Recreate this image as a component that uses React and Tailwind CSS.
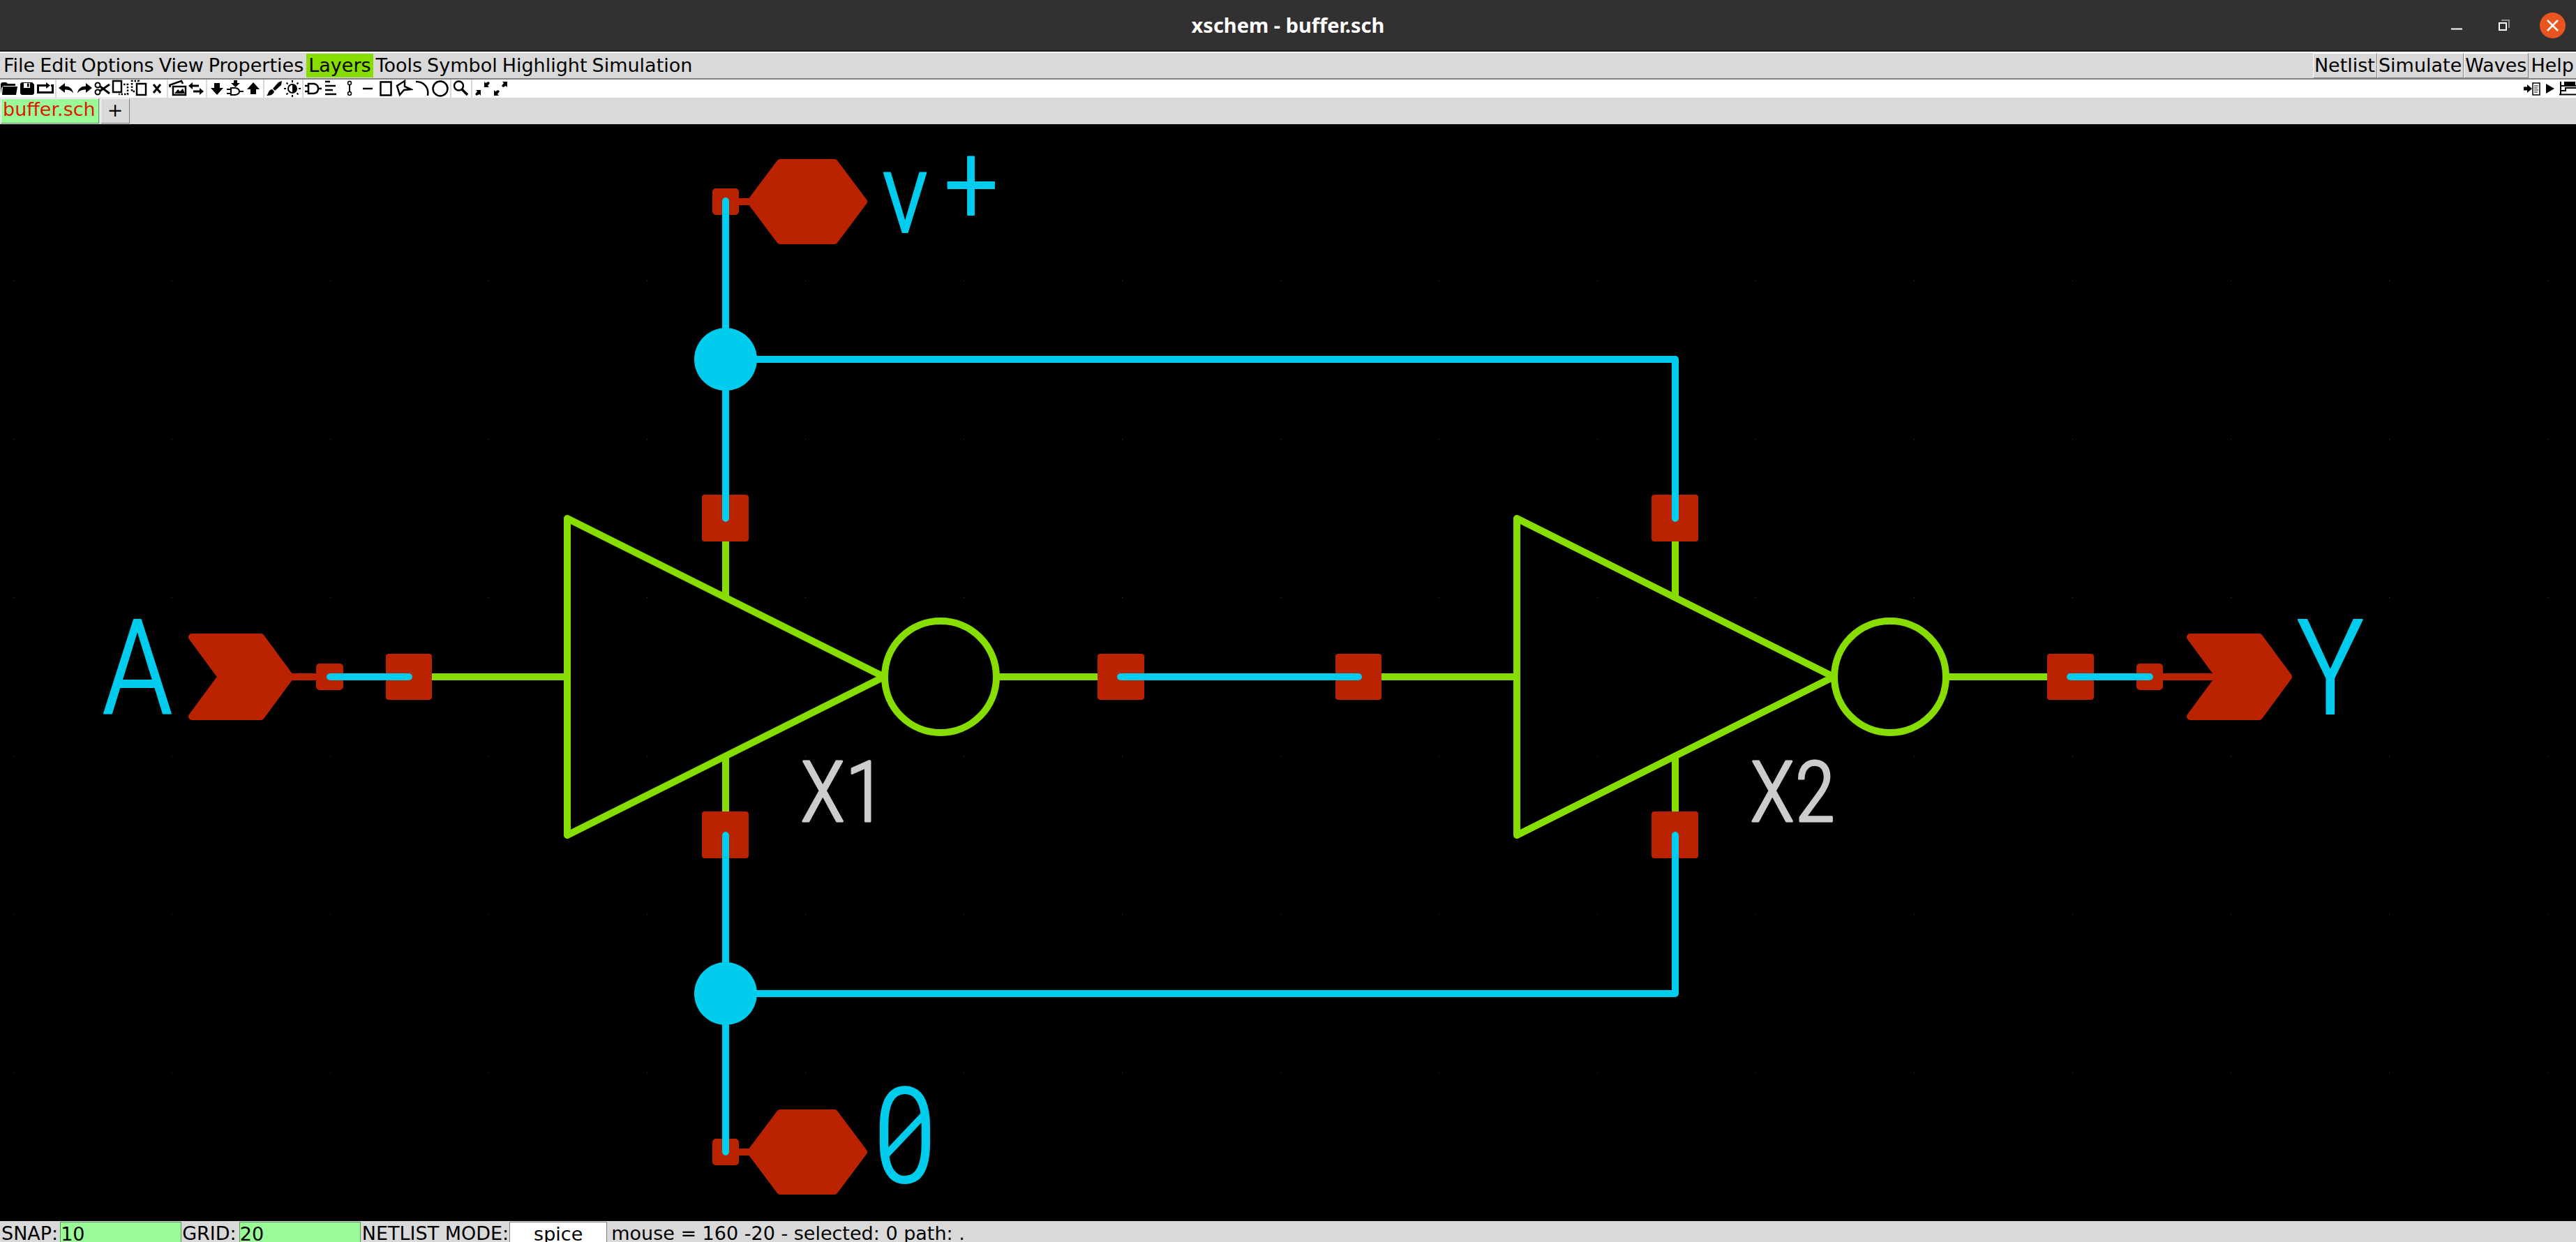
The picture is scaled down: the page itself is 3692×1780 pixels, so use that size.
const MENUS = ["File", "Edit", "Options", "View", "Properties", "Layers", "Tools", "Symbol", "Highlight", "Simulation"];
const ACTIONS = ["Netlist", "Simulate", "Waves"];

const ICONS = {
  Open: (
    <path d="M1 21V6l2-2h6l2 2h11v3H5L2 12zM4 10h21l-2 12H3z" fill="#000" stroke="#000" />
  ),
  Save: (
    <>
      <path d="M3 6l2-2h15l3 3v13l-2 2H5l-2-2z" fill="#000" />
      <path d="M8 5h9v7H8z" fill="#fff" />
      <path d="M13 5.500h2.500v5h-2.500z" fill="#000" />
    </>
  ),
  Reload: (
    <>
      <path d="M8 8.500H2.500v10h21v-10H21" strokeWidth="3" />
      <path d="M8 8.500h8" strokeWidth="3" />
      <path d="M14 4l6 4.500-6 4.500z" fill="#000" />
    </>
  ),
  Undo: <path d="M2 12l9-7v4.500c6 0 11 3 12 10-3-4-7-5-12-5V19z" fill="#000" />,
  Redo: <path d="M24 12l-9-7v4.500c-6 0-11 3-12 10 3-4 7-5 12-5V19z" fill="#000" />,
  Cut: (
    <>
      <circle cx="6" cy="8" r="3.500" strokeWidth="2" />
      <circle cx="6" cy="18" r="3.500" strokeWidth="2" />
      <path d="M9 9.500L23 20M9 16.500L23 7" strokeWidth="3" />
    </>
  ),
  Copy: (
    <>
      <path d="M2 2h12v16H2z" strokeWidth="2.500" />
      <path d="M17 7h6v14H10" strokeWidth="2.500" strokeDasharray="2.500 2" />
    </>
  ),
  Paste: (
    <>
      <path d="M10 6h13v16H10z" strokeWidth="2.500" />
      <path d="M7 17H3V2h10v2" strokeWidth="2.500" strokeDasharray="2.500 2" />
    </>
  ),
  Delete: <path d="M8 7l10 12M18 7L8 19" strokeWidth="3" />,
  Merge: (
    <>
      <path d="M2 11L1 8l17-6 2 4M6 10h18v12H6z" strokeWidth="2.500" />
      <path d="M8 20l5-6 3 3 4-4 3 7z" fill="#000" />
    </>
  ),
  Swap: (
    <>
      <path d="M7 9h10M9 17h10" strokeWidth="3" />
      <path d="M2 9l6-5v10zM24 17l-6-5v10z" fill="#000" />
    </>
  ),
  "Push schematic": <path d="M9 5h8v7h5l-9 10-9-10h5z" fill="#000" />,
  "Push symbol": (
    <>
      <path d="M11 1h5v4h4l-6.500 6L7 5h4z" fill="#000" />
      <path d="M7 12h6q6 1 6 5t-6 5H7zM1 14h6M1 20h6M19 17h6" strokeWidth="2" />
    </>
  ),
  Pop: <path d="M9 21h8v-7h5L13 4 4 14h5z" fill="#000" />,
  Draw: (
    <>
      <path d="M24 2l-1 6-9 8-3-3 8-9z" fill="#000" />
      <path d="M10 14l3 3c-1 5-6 6-11 6 3-2 2-8 8-9z" fill="#000" />
    </>
  ),
  Contrast: (
    <>
      <circle cx="13" cy="13" r="6" strokeWidth="2" />
      <path d="M13 7a6 6 0 0 1 0 12z" fill="#000" />
      <path d="M13 1v3M13 22v3M1 13h3M22 13h3M4.500 4.500l2 2M19.500 19.500l2 2M4.500 21.500l2-2M19.500 6.500l2-2" strokeWidth="2" />
    </>
  ),
  "Insert symbol": <path d="M6 6h8q6 1 6 7t-6 7H6zM1 9h5M1 17h5M20 13h5" strokeWidth="2.500" />,
  "Insert text": <path d="M4 3h7M4 9h15M4 15h11M4 21h16" strokeWidth="2.500" />,
  "Insert wire": (
    <>
      <circle cx="13" cy="5" r="2.500" strokeWidth="1.500" />
      <circle cx="13" cy="20" r="2.500" strokeWidth="1.500" />
      <path d="M13 7v11" strokeWidth="2" />
    </>
  ),
  "Insert line": <path d="M6 13h14" strokeWidth="2.500" />,
  "Insert rect": <path d="M5.500 3.500h15v19h-15z" strokeWidth="2.500" />,
  "Insert polygon": <path d="M14 2L3 9l4 13 6-7 10-1-9-4z" strokeWidth="2.500" />,
  "Insert arc": <path d="M4 3c12 0 19 9 17 20" strokeWidth="2.500" />,
  "Insert circle": <circle cx="13" cy="13" r="10.500" strokeWidth="2.500" />,
  "Zoom box": (
    <>
      <circle cx="9.500" cy="9" r="6.500" strokeWidth="2.500" />
      <path d="M14 14l8 8" strokeWidth="3.500" />
    </>
  ),
  "Zoom in": (
    <path d="M16 11V3l2 2 4-2 2 2-3 4 2 2zM11 15v8l-2-2-4 2-2-2 3-4-2-2z" fill="#000" />
  ),
  "Zoom full": (
    <path d="M23 3v8l-2-2-4 2-2-2 3-4-2-2zM4 15l2 2 4-2 2 2-3 4 2 2H4z" fill="#000" />
  ),
  "Make netlist": (
    <>
      <path d="M1 10.500h5V7l7 6-7 6v-3.500H1z" fill="#000" />
      <path d="M14 5h10v17H14z" strokeWidth="1.500" />
      <path d="M16 9h6M16 12h5M16 15h6M16 18h5" strokeWidth="1" />
    </>
  ),
  "Run simulation": <path d="M7 6l12 7-12 7z" fill="#000" />,
  "View waves": (
    <path d="M2 3v19M0 21.500h26M3 9h5V4h2v5h2V4h2v5h2V4h2v5h2V4h2v5h4M3 16h6v-4h17" strokeWidth="2" />
  ),
};

const TOOL_GROUPS = [
  ["Open", "Save", "Reload"],
  ["Undo", "Redo", "Cut", "Copy", "Paste", "Delete"],
  ["Merge", "Swap"],
  ["Push schematic", "Push symbol", "Pop"],
  ["Draw", "Contrast"],
  ["Insert symbol", "Insert text", "Insert wire", "Insert line", "Insert rect", "Insert polygon", "Insert arc", "Insert circle"],
  ["Zoom box"],
  ["Zoom in", "Zoom full"],
];

function ToolButton({ name }) {
  return (
    <button type="button" aria-label={name} className="size-[26px] shrink-0 bg-white">
      <svg viewBox="0 0 26 26" className="size-full" fill="none" stroke="#000" strokeWidth="0">
        {ICONS[name]}
      </svg>
    </button>
  );
}

function TitleBar() {
  return (
    <header className="grid h-[74px] shrink-0 grid-cols-3 items-center border-b-2 border-[#1f1f1f] bg-[#323030]">
      <span />
      <h1 className="text-center font-['Noto_Sans',sans-serif] text-[29px] leading-9 font-bold text-white">
        xschem - buffer.sch
      </h1>
      <div className="flex items-center justify-end gap-8 pr-[15px]">
        <button type="button" aria-label="Minimize" className="size-[37px]">
          <svg viewBox="0 0 37 37" className="size-full">
            <path d="M11 23.500h16" stroke="#fff" strokeWidth="2" />
          </svg>
        </button>
        <button type="button" aria-label="Restore" className="size-[37px]">
          <svg viewBox="0 0 37 37" className="size-full" fill="none" strokeWidth="2">
            <path d="M14 11h11v11" stroke="#8f8e8e" />
            <path d="M11 15h10v10H11z" stroke="#fff" />
          </svg>
        </button>
        <button type="button" aria-label="Close" className="size-[37px] rounded-full bg-[#e95420]">
          <svg viewBox="0 0 37 37" className="size-full">
            <path d="M11 11l15 15M26 11L11 26" stroke="#fff" strokeWidth="2.500" />
          </svg>
        </button>
      </div>
    </header>
  );
}

function MenuBar() {
  return (
    <nav className="flex shrink-0 items-stretch gap-px border-t-2 border-b-2 border-t-white border-b-[#828282] pl-0.5">
      {MENUS.map((m) => (
        <button
          key={m}
          type="button"
          className={
            m === "Layers"
              ? "my-px h-[34px] bg-[#88dd00] px-[3px] leading-[34px]"
              : "h-9 px-[3px] leading-9"
          }
        >
          {m}
        </button>
      ))}
      <div className="ml-auto flex">
        {ACTIONS.map((a) => (
          <button
            key={a}
            type="button"
            className="h-9 border border-t-white border-r-[#828282] border-b-[#828282] border-l-white pr-0.5 pl-px leading-[34px]"
          >
            {a}
          </button>
        ))}
        <button type="button" className="h-9 px-[3px] leading-9">Help</button>
      </div>
    </nav>
  );
}

function ToolBar() {
  return (
    <div role="toolbar" className="flex h-[26px] shrink-0 overflow-hidden bg-white">
      {TOOL_GROUPS.map((group, i) => (
        <div key={group[0]} className="flex">
          {i > 0 && <span className="mx-px w-0.5 bg-[#d9d9d9]" />}
          {group.map((name) => (
            <ToolButton key={name} name={name} />
          ))}
        </div>
      ))}
      <div className="-mr-0.5 ml-auto flex">
        <ToolButton name="Make netlist" />
        <ToolButton name="Run simulation" />
        <ToolButton name="View waves" />
      </div>
    </div>
  );
}

function Tabs() {
  return (
    <div className="flex h-[38px] shrink-0 gap-0.5 px-px py-px">
      <button
        type="button"
        className="border border-t-white border-r-[#5a975a] border-b-[#5a975a] border-l-white bg-[#98fb98] pr-1 pb-1 pl-0.5 leading-[30px] text-[#e01800]"
      >
        buffer.sch
      </button>
      <button
        type="button"
        className="border border-t-white border-r-[#828282] border-b-[#828282] border-l-white px-[9px] pb-0.5 leading-8"
      >
        +
      </button>
    </div>
  );
}

const CYAN = "#00ccee";
const GREEN = "#88dd00";
const RED = "#bb2200";

const GRID_STEP = 227;
const GRID_DOTS = Array.from({ length: 17 * 6 }, (_, i) => ({
  x: 19 + (i % 17) * GRID_STEP,
  y: 402 + Math.floor(i / 17) * GRID_STEP,
}));

function Inverter({ x }) {
  return (
    <g transform={`translate(${x} 970)`}>
      <g stroke={GREEN} strokeWidth="10" strokeLinecap="round" strokeLinejoin="round" fill="none">
        <path d="M0-227L454 0L0 227z" />
        <circle cx="535" cy="0" r="80" />
        <path d="M-227 0H0M615 0H793M227-227V-114M227 114V227" />
      </g>
      <g fill={RED}>
        <rect x="-260" y="-33" width="66" height="66" rx="4" />
        <rect x="760" y="-33" width="67" height="66" rx="4" />
        <rect x="193" y="-261" width="67" height="67" rx="4" />
        <rect x="193" y="193" width="67" height="67" rx="4" />
      </g>
    </g>
  );
}

function SupplyPin({ y }) {
  return (
    <g transform={`translate(1040 ${y})`} fill={RED} stroke={RED} strokeWidth="10" strokeLinejoin="round">
      <rect x="-14" y="-14" width="28" height="28" />
      <path d="M0 0H36L78-56H156L198 0L156 56H78L36 0" />
    </g>
  );
}

function PortArrow({ x }) {
  return <path transform={`translate(${x} 970)`} d="M0-57H99L141 0L99 57H0L42 0z" />;
}

function Schematic() {
  return (
    <main className="min-h-0 flex-1 bg-black">
      <svg viewBox="0 178 3692 1572" className="size-full" role="img" aria-label="buffer schematic">
        <g fill="#444">
          {GRID_DOTS.map((d) => (
            <rect key={`${d.x}-${d.y}`} x={d.x} y={d.y} width="1" height="1" />
          ))}
        </g>

        <Inverter x={813} />
        <Inverter x={2174} />

        <SupplyPin y={289} />
        <SupplyPin y={1651} />

        <g fill={RED} stroke={RED} strokeWidth="10" strokeLinejoin="round">
          <PortArrow x={275} />
          <PortArrow x={3139} />
          <rect x="458" y="956" width="29" height="28" />
          <rect x="3067" y="956" width="28" height="28" />
          <path d="M416 970H460M3090 970H3185" />
        </g>

        <g stroke={CYAN} strokeWidth="10" strokeLinecap="round" strokeLinejoin="round" fill="none">
          <path d="M1040 288V743M1040 515H2401V743" />
          <path d="M1040 1197V1651M1040 1424H2401V1197" />
          <path d="M473 970H586M1606 970H1947M2967 970H3081" />
        </g>
        <circle cx="1040" cy="515" r="45" fill={CYAN} />
        <circle cx="1040" cy="1424" r="45" fill={CYAN} />

        <g
          className="font-['Roboto_Condensed',Roboto,sans-serif] font-light"
          fill={CYAN}
          stroke={CYAN}
          strokeWidth="2"
          strokeLinejoin="round"
          textAnchor="middle"
        >
          <text x="197" y="1023" fontSize="190">A</text>
          <text x="3340" y="1023" fontSize="190">Y</text>
          <text x="1297 1392" y="333 320" fontSize="162">v+</text>
          <text x="1297" y="1694" fontSize="190">0</text>
          <path d="M1270 1655L1324 1598" strokeWidth="10" />
        </g>
        <g
          className="font-['Roboto_Condensed',Roboto,sans-serif] font-light"
          fill="#cccccc"
          stroke="#cccccc"
          strokeWidth="3"
          strokeLinejoin="round"
        >
          <text x="1147" y="1177" fontSize="120">X1</text>
          <text x="2508" y="1177" fontSize="120">X2</text>
        </g>
      </svg>
    </main>
  );
}

function StatusBar() {
  return (
    <footer className="flex h-[30px] shrink-0 items-start overflow-hidden pl-px leading-9 whitespace-pre">
      <label htmlFor="snap" className="pr-[3px] pl-px">SNAP:</label>
      <input
        id="snap"
        defaultValue="10"
        className="mt-px h-[34px] w-[174px] border border-[#5a975a] bg-[#98fb98] leading-8"
      />
      <label htmlFor="grid-size" className="pr-1 pl-px">GRID:</label>
      <input
        id="grid-size"
        defaultValue="20"
        className="mt-px h-[34px] w-[174px] border border-[#5a975a] bg-[#98fb98] leading-8"
      />
      <label htmlFor="mode" className="pr-px pl-0.5">NETLIST MODE:</label>
      <input
        id="mode"
        defaultValue="spice"
        className="mt-px h-[34px] w-[140px] border border-[#828282] bg-white text-center leading-8"
      />
      <span className="pl-1.5">mouse = 160 -20 - selected: 0 path: .</span>
    </footer>
  );
}

export default function App() {
  return (
    <div className="flex h-screen flex-col overflow-hidden bg-[#d9d9d9] font-['DejaVu_Sans',sans-serif] text-[27px] text-black">
      <TitleBar />
      <MenuBar />
      <ToolBar />
      <Tabs />
      <Schematic />
      <StatusBar />
    </div>
  );
}
